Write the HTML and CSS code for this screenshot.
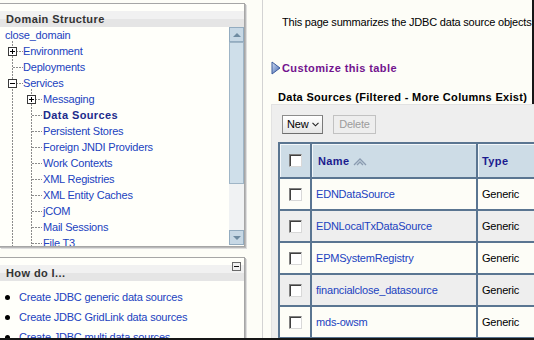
FILE: index.html
```html
<!DOCTYPE html>
<html>
<head>
<meta charset="utf-8">
<link rel="stylesheet" href="styles.css">
</head>
<body>
<div class="screen">
  <aside class="sidebar">
    <section class="panel panel-domain">
      <h2 class="panel-title">Domain Structure</h2>
      <div class="panel-body">
        <div class="tree">
          <div class="row root"><a>close_domain</a></div>
          <ul class="l1">
            <li><div class="row"><span class="exp plus"></span><a>Environment</a></div></li>
            <li><div class="row"><a>Deployments</a></div></li>
            <li><div class="row"><span class="exp minus"></span><a>Services</a></div>
              <ul class="l2">
                <li><div class="row"><span class="exp plus"></span><a>Messaging</a></div></li>
                <li><div class="row"><a class="current">Data Sources</a></div></li>
                <li><div class="row"><a>Persistent Stores</a></div></li>
                <li><div class="row"><a>Foreign JNDI Providers</a></div></li>
                <li><div class="row"><a>Work Contexts</a></div></li>
                <li><div class="row"><a>XML Registries</a></div></li>
                <li><div class="row"><a>XML Entity Caches</a></div></li>
                <li><div class="row"><a>jCOM</a></div></li>
                <li><div class="row"><a>Mail Sessions</a></div></li>
                <li><div class="row"><a>File T3</a></div></li>
              </ul>
            </li>
          </ul>
        </div>
        <div class="scrollbar">
          <div class="sb-btn"><span class="arrow up"></span></div>
          <div class="sb-thumb"></div>
          <div class="sb-track"></div>
          <div class="sb-btn"><span class="arrow down"></span></div>
        </div>
      </div>
    </section>
    <section class="panel panel-howto">
      <h2 class="panel-title">How do I...</h2>
      <span class="collapse"></span>
      <ul class="howto">
        <li><a>Create JDBC generic data sources</a></li>
        <li><a>Create JDBC GridLink data sources</a></li>
        <li><a>Create JDBC multi data sources</a></li>
      </ul>
    </section>
  </aside>
  <main class="content">
    <div class="content-head">
      <p class="intro">This page summarizes the JDBC data source objects</p>
      <a class="customize"><svg class="disclose" width="10" height="14" viewBox="0 0 10 14"><defs><linearGradient id="tri" x1="0" y1="0" x2="1" y2="1"><stop offset="0" stop-color="#d6e3f5"/><stop offset="1" stop-color="#3a5fae"/></linearGradient></defs><polygon points="1,1 9,7 1,13" fill="url(#tri)" stroke="#3b5a9c" stroke-width="1"/></svg>Customize this table</a>
      <h3 class="section-title">Data Sources (Filtered - More Columns Exist)</h3>
    </div>
    <div class="tablebox">
      <div class="toolbar">
        <button class="btn btn-new">New<svg class="chev" width="7" height="5" viewBox="0 0 7 5"><polyline points="0.5,0.8 3.5,3.8 6.5,0.8" fill="none" stroke="#222" stroke-width="1.1"/></svg></button>
        <button class="btn btn-disabled" disabled>Delete</button>
      </div>
      <table class="grid">
        <thead>
          <tr>
            <th class="col-cb"><span class="cb"></span></th>
            <th class="col-name">Name<svg class="sort" width="14" height="9" viewBox="0 0 14 9"><polyline points="1,8 7,2 13,8" fill="none" stroke="#8a9bb0" stroke-width="1.3"/><polyline points="4,8 7,5 10,8" fill="none" stroke="#8a9bb0" stroke-width="1.3"/></svg></th>
            <th class="col-type">Type</th>
          </tr>
        </thead>
        <tbody>
          <tr><td class="col-cb"><span class="cb"></span></td><td><a>EDNDataSource</a></td><td>Generic</td></tr>
          <tr><td class="col-cb"><span class="cb"></span></td><td><a>EDNLocalTxDataSource</a></td><td>Generic</td></tr>
          <tr><td class="col-cb"><span class="cb"></span></td><td><a>EPMSystemRegistry</a></td><td>Generic</td></tr>
          <tr><td class="col-cb"><span class="cb"></span></td><td><a>financialclose_datasource</a></td><td>Generic</td></tr>
          <tr><td class="col-cb"><span class="cb"></span></td><td><a>mds-owsm</a></td><td>Generic</td></tr>
        </tbody>
      </table>
    </div>
  </main>
</div>
</body>
</html>
```
FILE: styles.css
```css
* { box-sizing: border-box; }
html, body { margin: 0; padding: 0; }
body {
  font-family: "Liberation Sans", Arial, sans-serif;
  font-size: 11px;
  letter-spacing: -0.2px;
  color: #000;
  background: #fdfdf7;
}
a { color: #2142bf; text-decoration: none; }

.screen {
  display: flex;
  width: 534px;
  height: 340px;
  overflow: hidden;
  background: #fdfdf7;
  border-bottom: 2px solid #161616;
}

/* ---------- sidebar ---------- */
.sidebar { width: 262px; flex: none; }

.panel {
  position: relative;
  width: 246px;
  margin-left: -1px;
  border: 1px solid #a6a6a6;
  background: #fffffa;
  box-shadow: 1px 1px 0 #b9b9b9, 2px 2px 0 #dedede;
  padding-top: 7px;
}
.panel-domain { margin-top: 3px; height: 244px; }
.panel-howto { margin-top: 10px; height: 100px; }

.panel-title {
  margin: 0;
  height: 16px;
  line-height: 16px;
  padding-left: 6px;
  font-size: 11px;
  font-weight: bold;
  letter-spacing: 0.4px;
  color: #333;
  background: linear-gradient(#f1f1f1 0, #f1f1f1 50%, #e5e5e5 50%, #e5e5e5 100%);
}

.panel-body { display: flex; height: 219px; }

.tree { flex: 1; overflow: hidden; }
.row {
  position: relative;
  height: 16px;
  line-height: 16px;
  white-space: nowrap;
}
.root { padding-left: 5px; }
.tree ul { list-style: none; margin: 0; padding: 0; position: relative; }
.tree ul::before {
  content: "";
  position: absolute;
  left: 0;
  top: -2px;
  bottom: 0;
  width: 1px;
  background: repeating-linear-gradient(to bottom, #8c8c8c 0, #8c8c8c 2px, transparent 2px, transparent 3px);
}
.l1 { margin-left: 12px !important; padding-bottom: 40px !important; }
.l2 { margin-left: 19px !important; padding-bottom: 40px !important; }
.l1 > li > .row { padding-left: 11px; }
.l2 > li > .row { padding-left: 12px; }
.tree li > .row::before {
  content: "";
  position: absolute;
  left: 1px;
  top: 8px;
  width: 10px;
  height: 1px;
  background: repeating-linear-gradient(to right, #8c8c8c 0, #8c8c8c 2px, transparent 2px, transparent 3px);
}
.exp {
  position: absolute;
  left: -4px;
  top: 4px;
  width: 9px;
  height: 9px;
  border: 1px solid #3a3a3a;
  background: #fff;
  z-index: 1;
}
.exp::before {
  content: "";
  position: absolute;
  left: 1px;
  top: 3px;
  width: 5px;
  height: 1px;
  background: #000;
}
.exp.plus::after {
  content: "";
  position: absolute;
  left: 3px;
  top: 1px;
  width: 1px;
  height: 5px;
  background: #000;
}
.current { font-weight: bold; color: #1c2b8c; letter-spacing: 0.4px; }

/* scrollbar */
.scrollbar {
  width: 15px;
  flex: none;
  display: flex;
  flex-direction: column;
  padding: 0 0 1px;
}
.sb-btn {
  height: 15px;
  flex: none;
  border: 1px solid #93acc0;
  background: #c7d8e5;
  display: flex;
  align-items: center;
  justify-content: center;
}
.sb-thumb {
  height: 142px;
  flex: none;
  border: 1px solid #9fb5c6;
  background: #cfdfea;
}
.sb-track { flex: 1; background: #f0f2f3; }
.arrow { width: 0; height: 0; border-left: 4px solid transparent; border-right: 4px solid transparent; }
.arrow.up { border-bottom: 4px solid #6f8ba1; }
.arrow.down { border-top: 4px solid #6f8ba1; }

/* how do I */
.collapse {
  position: absolute;
  left: 232px;
  top: 4px;
  width: 9px;
  height: 9px;
  border: 1px solid #6a6a6a;
  background: #f1f1f1;
}
.collapse::before {
  content: "";
  position: absolute;
  left: 1px;
  top: 3px;
  width: 5px;
  height: 1px;
  background: #111;
}
.howto { list-style: none; margin: 6px 0 0; padding: 0; }
.howto li {
  position: relative;
  height: 20px;
  line-height: 20px;
  padding-left: 19px;
  white-space: nowrap;
}
.howto li::before {
  content: "";
  position: absolute;
  left: 5px;
  top: 8px;
  width: 5px;
  height: 5px;
  border-radius: 50%;
  background: #000;
}

/* ---------- content ---------- */
.content {
  flex: 1;
  min-width: 0;
  border-left: 1px solid #d3d3d3;
  overflow: hidden;
}
.content-head {
  height: 104px;
  padding-top: 15px;
  border-right: 2px solid #161616;
}
.intro {
  margin: 0 0 0 19px;
  line-height: 14px;
  white-space: nowrap;
  overflow: hidden;
}
.customize {
  display: flex;
  align-items: center;
  margin: 32px 0 0 8px;
  height: 14px;
  font-weight: bold;
  letter-spacing: 0.4px;
  color: #72138e;
  white-space: nowrap;
}
.disclose { margin-right: 1px; flex: none; }
.section-title {
  margin: 15px 0 0 15px;
  font-size: 11px;
  line-height: 14px;
  font-weight: bold;
  letter-spacing: 0.3px;
  white-space: nowrap;
}
.tablebox {
  margin-left: 8px;
  width: 400px;
  height: 260px;
  background: #eeeeee;
  border-top: 1px solid #e2e2e2;
  border-left: 1px solid #e2e2e2;
  padding: 10px 0 0 6px;
}
.toolbar { display: flex; gap: 10px; padding-left: 4px; height: 19px; }
.btn {
  height: 19px;
  padding: 0 4px;
  font-family: "Liberation Sans", Arial, sans-serif;
  font-size: 11px;
  letter-spacing: -0.2px;
  border: 1px solid #8c8c8c;
  border-right-color: #7a7a7a;
  border-bottom-color: #6e6e6e;
  background: linear-gradient(#ffffff, #e6e6e6);
  color: #000;
  border-radius: 0;
  line-height: 17px;
}
.btn-new {
  width: 41px;
  padding-left: 4px;
  display: flex;
  align-items: center;
}
.chev { margin-left: 4px; flex: none; }
.btn-disabled {
  width: 43px;
  color: #9c9c9c;
  border-color: #c2c2c2;
  background: #eeeeee;
}

.grid {
  margin-top: 8px;
  border-collapse: separate;
  border-spacing: 2px;
  background: #5a7591;
  width: 340px;
  table-layout: fixed;
}
.grid th, .grid td {
  padding: 0 0 0 4px;
  text-align: left;
  white-space: nowrap;
  overflow: hidden;
}
.grid th {
  height: 33px;
  background: #cddce6;
  box-shadow: inset 1px 1px 0 #f3f7fa;
  font-weight: bold;
  letter-spacing: 0.4px;
  color: #1b1b8e;
}
.grid td { height: 30px; background: #fdfdf7; }
.grid tbody tr:nth-child(even) td { background: #eeeeee; }
.grid .col-cb { width: 30px; padding: 0; text-align: center; }
.grid .col-name { width: 164px; padding-left: 6px; }
.grid .col-type { width: 140px; }
.sort { vertical-align: -1px; margin-left: 3px; }
.cb {
  display: inline-block;
  width: 13px;
  height: 13px;
  vertical-align: middle;
  background: #fff;
  border-top: 1px solid #808080;
  border-left: 1px solid #808080;
  border-right: 1px solid #d8d8d8;
  border-bottom: 1px solid #d8d8d8;
  box-shadow: inset 1px 1px 0 #404040;
}
```
